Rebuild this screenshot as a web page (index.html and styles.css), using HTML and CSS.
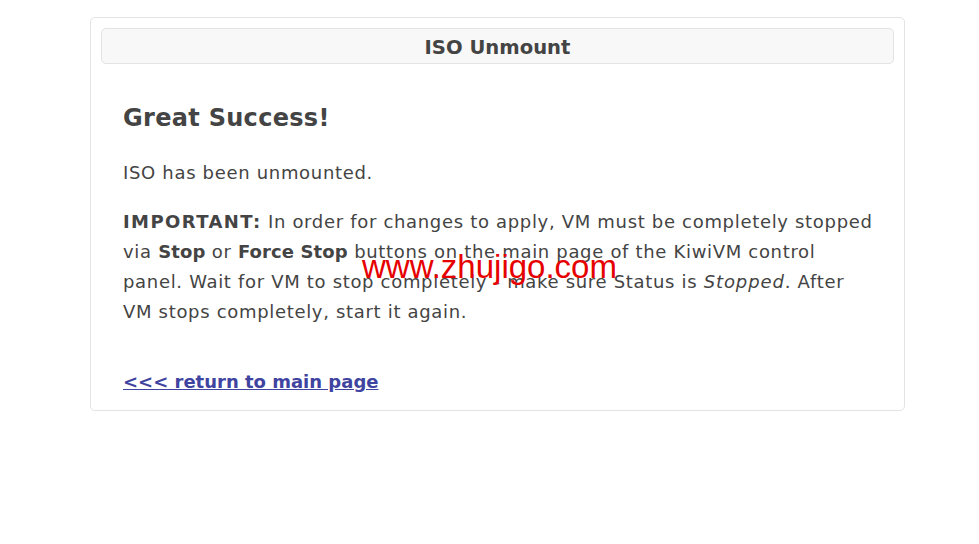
FILE: index.html
```html
<!DOCTYPE html>
<html>
<head>
<meta charset="utf-8">
<link rel="stylesheet" href="styles.css">
</head>
<body>
<div class="page">
  <div class="card">
    <div class="card-header">ISO Unmount</div>
    <div class="card-body">
      <h2 class="title">Great Success!</h2>
      <p class="text">ISO has been unmounted.</p>
      <p class="text"><b class="strong caps">IMPORTANT:</b> In order for changes to apply, VM must be completely stopped via <b class="strong">Stop</b> or <b class="strong">Force Stop</b> buttons on the main page of the KiwiVM control panel. Wait for VM to stop completely - make sure Status is <i class="em">Stopped</i>. After VM stops completely, start it again.</p>
      <p class="back"><a href="#" class="back-link">&lt;&lt;&lt; return to main page</a></p>
    </div>
    <div class="watermark">www.zhujigo.com</div>
  </div>
</div>
</body>
</html>
```
FILE: styles.css
```css
html, body {
  margin: 0;
  padding: 0;
  background: #fff;
}
body {
  font-family: "DejaVu Sans", Verdana, sans-serif;
  color: #444;
}
.page {
  padding: 17px 0 0 90px;
}
.card {
  position: relative;
  width: 793px;
  border: 1px solid #e3e3e3;
  border-radius: 5px;
  padding: 10px 10px 13px;
}
.card-header {
  background: #f8f8f8;
  border: 1px solid #e3e3e3;
  border-radius: 5px;
  height: 34px;
  line-height: 37px;
  text-align: center;
  font-weight: bold;
  font-size: 19.6px;
  color: #444;
}
.card-body {
  padding: 0 16px 0 22px;
}
.title {
  margin: 38px 0 0;
  font-size: 24px;
  line-height: 32px;
  font-weight: bold;
  letter-spacing: 0.3px;
  color: #444;
}
.text {
  margin: 24px 0 0;
  font-size: 18px;
  line-height: 30px;
  letter-spacing: 0.68px;
}
.text + .text {
  margin-top: 19px;
}
.strong {
  letter-spacing: 0.1px;
}
.caps {
  letter-spacing: 1.4px;
}
.em {
  letter-spacing: 0.9px;
}
.back {
  margin: 40px 0 0;
  font-size: 18px;
  line-height: 30px;
}
.back-link {
  color: #3f44a0;
  font-weight: bold;
}
.watermark {
  position: absolute;
  left: 271px;
  top: 232px;
  font-family: "Liberation Sans", Arial, sans-serif;
  font-size: 33px;
  line-height: 1;
  color: #e60000;
  white-space: nowrap;
}
```
